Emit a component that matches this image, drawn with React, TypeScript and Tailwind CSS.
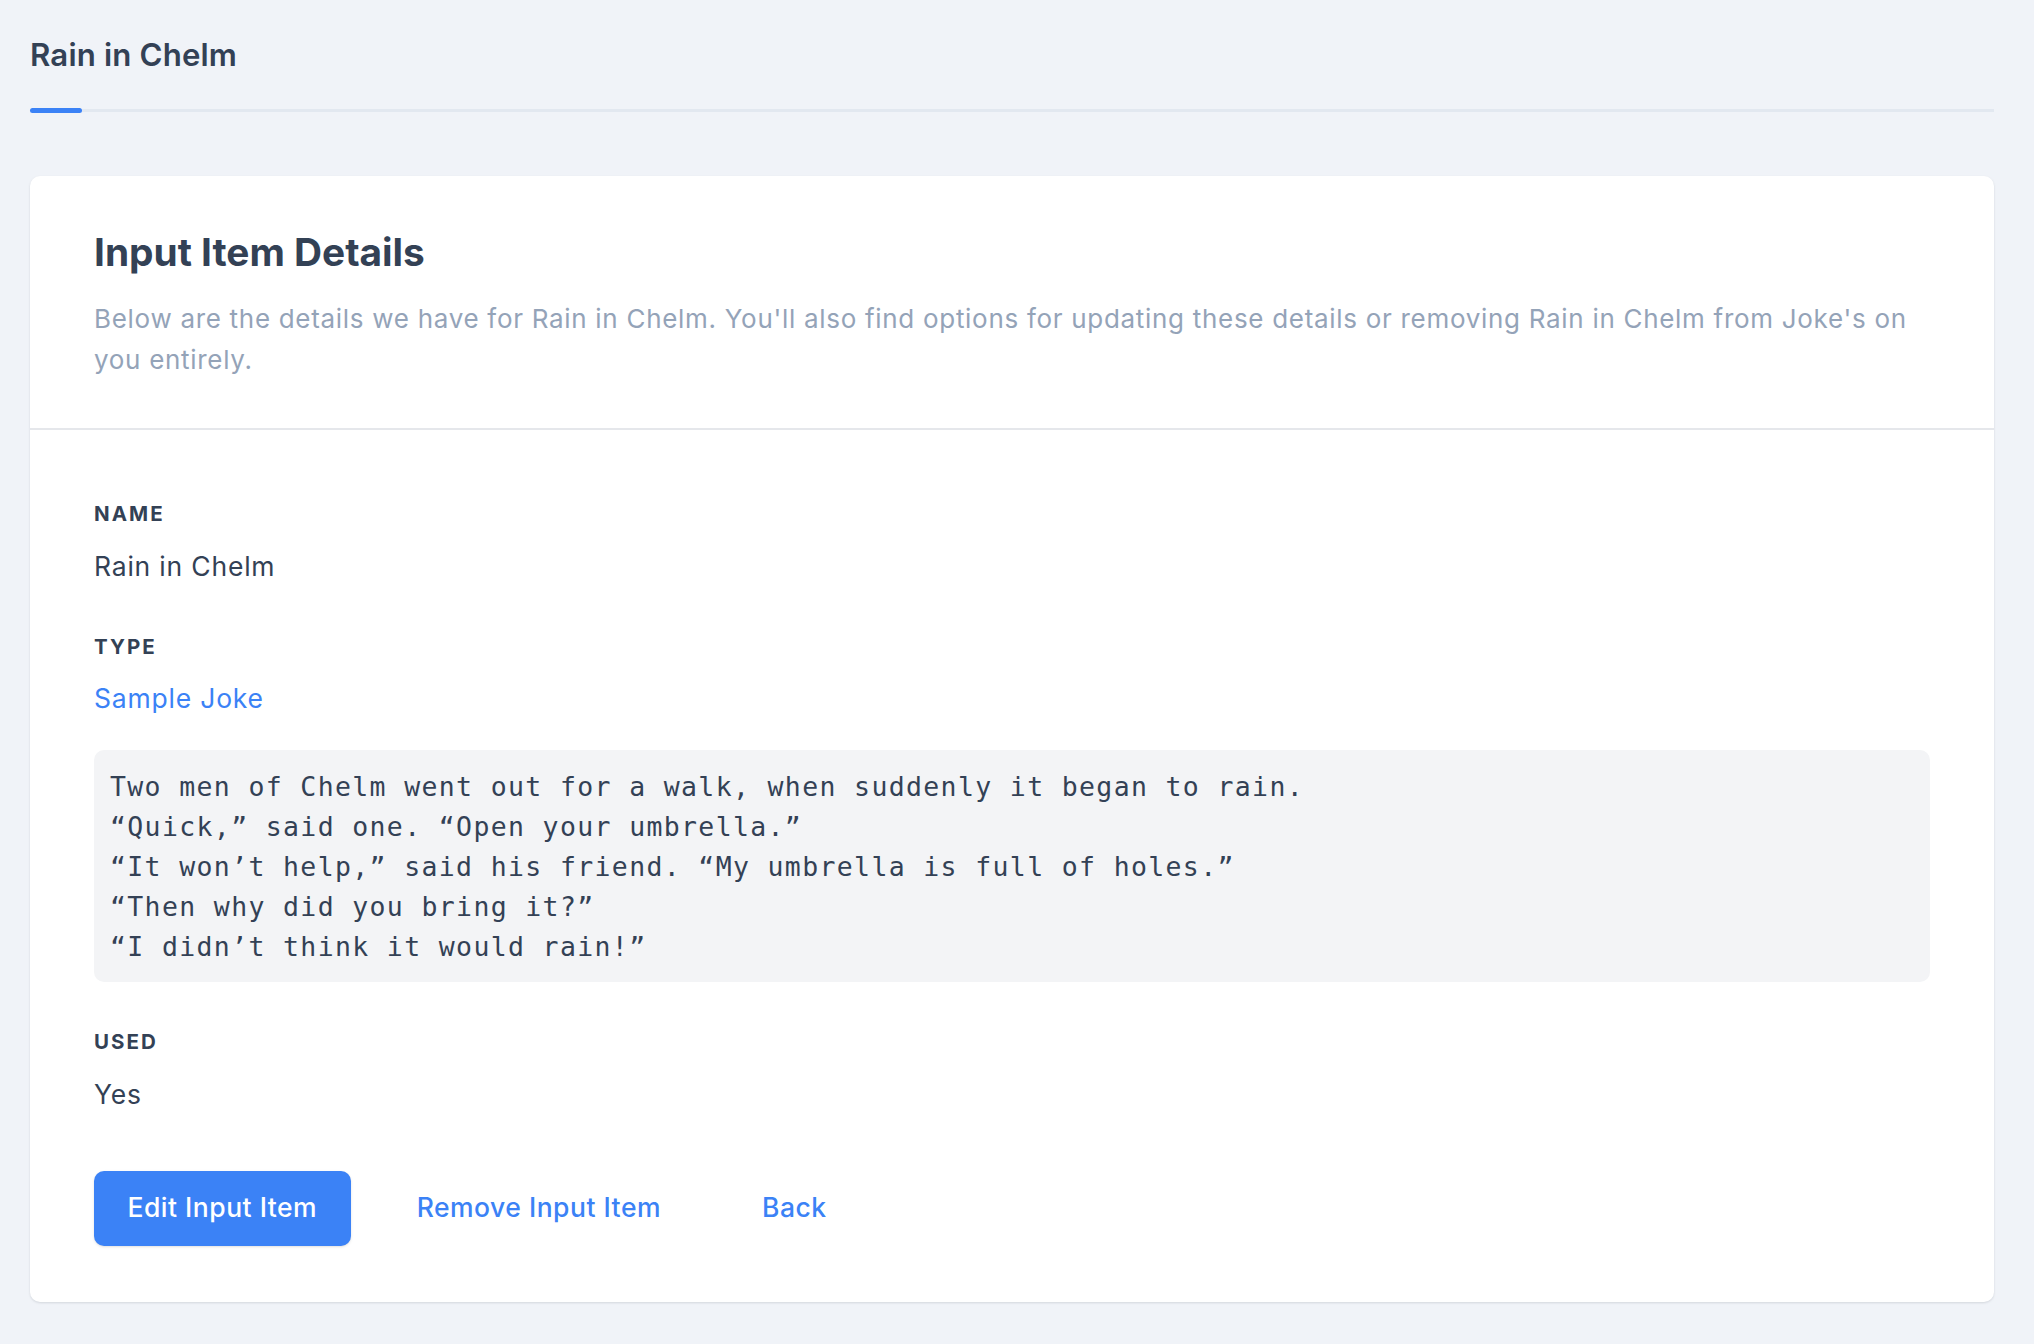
import React from "react";

const lines = [
  "Two men of Chelm went out for a walk, when suddenly it began to rain.",
  "\u201CQuick,\u201D said one. \u201COpen your umbrella.\u201D",
  "\u201CIt won\u2019t help,\u201D said his friend. \u201CMy umbrella is full of holes.\u201D",
  "\u201CThen why did you bring it?\u201D",
  "\u201CI didn\u2019t think it would rain!\u201D",
];

function Field({ label, children }: { label: string; children: React.ReactNode }) {
  return (
    <div className="flex flex-col">
      <div className="text-[20.5px] leading-[31px] font-bold uppercase tracking-[0.1em] text-[#334155]">
        {label}
      </div>
      <div className="mt-[17.5px]">{children}</div>
    </div>
  );
}

export default function App() {
  return (
    <div
      className="min-h-[1344px] w-full bg-[#f0f3f8] pl-[30px] pr-[40px] pt-[35px] pb-[40px]"
      style={{ fontFamily: "Inter, 'Noto Sans', sans-serif" }}
    >
      <h1 className="text-[31.2px] leading-[41.6px] font-semibold tracking-[0.15px] text-[#334155]">
        Rain in Chelm
      </h1>
      <div className="mt-[31px] flex items-center">
        <div className="h-[5.5px] w-[52px] rounded-full bg-[#3b82f6]" />
        <div className="h-[2.5px] flex-1 bg-[#e2e8f0]" />
      </div>

      <div className="mt-[63px] rounded-[10px] bg-white shadow-[0_1px_3px_rgba(15,23,42,0.08),0_1px_2px_rgba(15,23,42,0.05)]">
        <div className="border-b-2 border-[#e5e7eb] px-[64px] pt-[53px] pb-[47px]">
          <h2 className="text-[38.8px] leading-[46.8px] font-bold text-[#334155]">Input Item Details</h2>
          <p className="mt-[22px] text-[26px] leading-[41.6px] tracking-[0.7px] text-[#94a3b8]">
            Below are the details we have for Rain in Chelm. You'll also find options for updating these
            details or removing Rain in Chelm from Joke's on you entirely.
          </p>
        </div>

        <div className="px-[64px] pt-[68px] pb-[56px]">
          <Field label="Name">
            <div className="text-[26.5px] leading-[39px] tracking-[0.8px] text-[#334155]">Rain in Chelm</div>
          </Field>

          <div className="mt-[45px]">
            <Field label="Type">
              <div className="text-[26.5px] leading-[39px] tracking-[0.8px] text-[#3b82f6]">Sample Joke</div>
            </Field>
          </div>

          <div
            className="mt-[32px] rounded-[10px] bg-[#f3f4f6] px-[16px] pt-[17px] pb-[15px] text-[26.5px] leading-[40px] tracking-[1.35px] text-[#334155]"
            style={{ fontFamily: "'DejaVu Sans Mono', 'Liberation Mono', monospace" }}
          >
            {lines.map((l, i) => (
              <div key={i} className="whitespace-pre">
                {l}
              </div>
            ))}
          </div>

          <div className="mt-[44px]">
            <Field label="Used">
              <div className="text-[26.5px] leading-[39px] tracking-[0.8px] text-[#334155]">Yes</div>
            </Field>
          </div>

          <div className="mt-[57px] flex items-center">
            <button className="h-[75px] rounded-[10px] bg-[#3b82f6] px-[33.5px] text-[26.5px] font-medium tracking-[0.5px] text-white shadow-sm">
              Edit Input Item
            </button>
            <button className="ml-[31px] h-[75px] px-[35px] text-[26.5px] font-medium tracking-[0.5px] text-[#3b82f6]">
              Remove Input Item
            </button>
            <button className="ml-[31px] h-[75px] px-[35px] text-[26.5px] font-medium tracking-[0.5px] text-[#3b82f6]">
              Back
            </button>
          </div>
        </div>
      </div>
    </div>
  );
}
